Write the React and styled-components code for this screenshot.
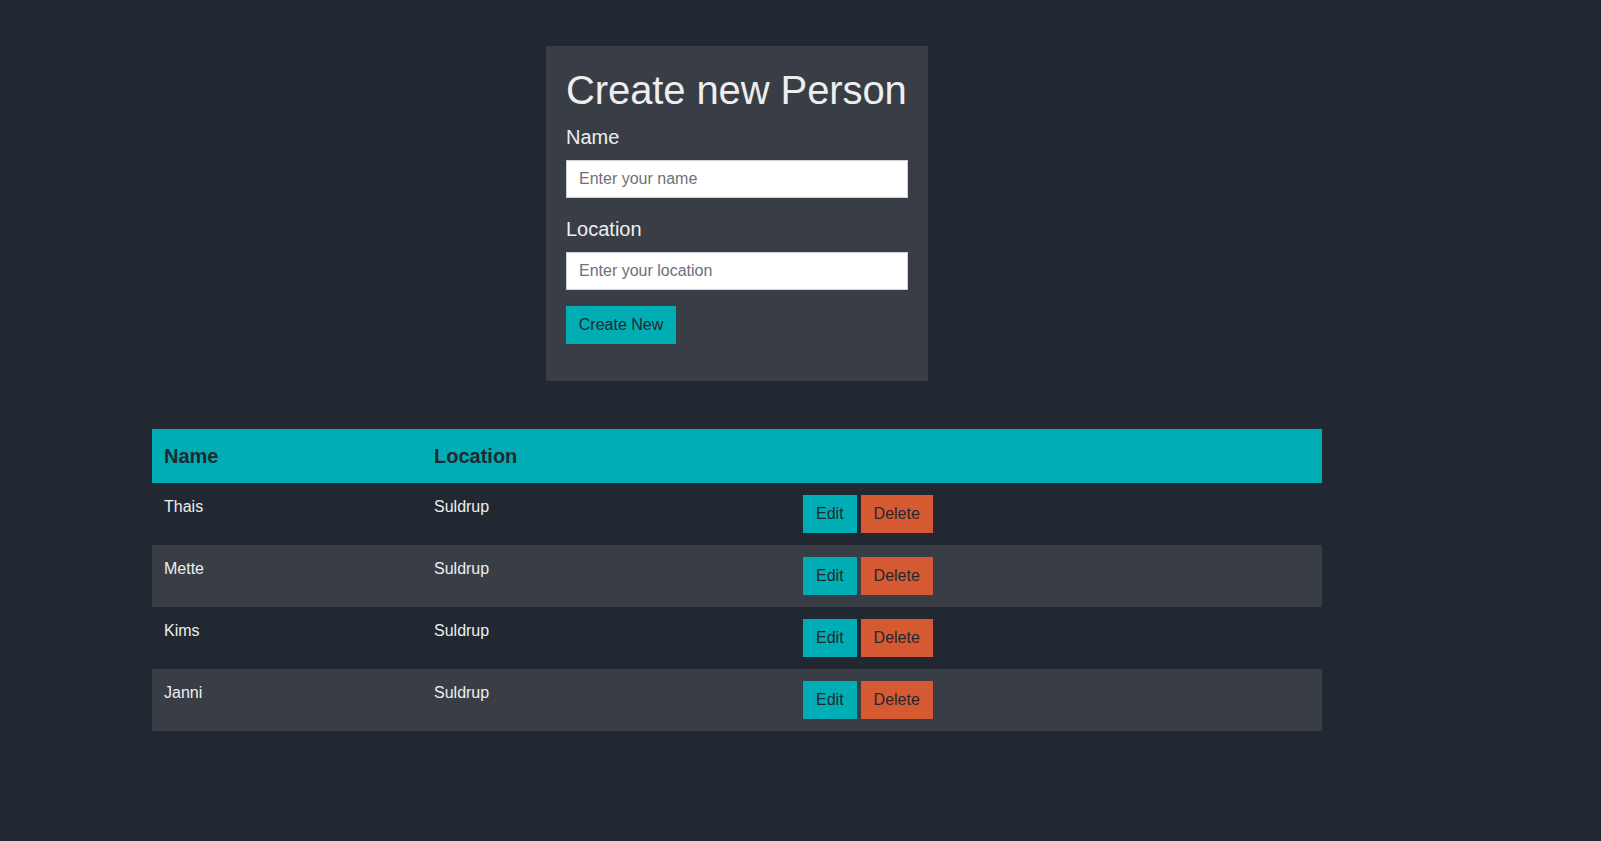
import React from "react";
import styled, { createGlobalStyle } from "styled-components";

const GlobalStyle = createGlobalStyle`
  html, body {
    margin: 0;
    padding: 0;
    background: #222831;
  }
  body {
    min-height: 841px;
    font-family: "Liberation Sans", Arial, sans-serif;
    color: #eeeeee;
    line-height: 1.5;
  }
  * { box-sizing: border-box; }
`;

const Page = styled.div`
  padding: 46px 0 40px 152px;
`;

const Container = styled.div`
  width: 1170px;
  display: flex;
  flex-direction: column;
  align-items: center;
  gap: 48px;
`;

const Card = styled.form`
  width: 382px;
  background: #393e46;
  padding: 20px 20px 37px;
  display: flex;
  flex-direction: column;
`;

const Title = styled.h1`
  margin: 0 0 8px;
  font-size: 40px;
  font-weight: 400;
  line-height: 1.2;
  white-space: nowrap;
  letter-spacing: -0.1px;
  color: #eeeeee;
`;

const Label = styled.label`
  font-size: 20px;
  line-height: 30px;
  margin-bottom: 8px;
  color: #eeeeee;
`;

const Input = styled.input`
  height: 38px;
  width: 100%;
  border: 1px solid #cfd3d8;
  background: #ffffff;
  padding: 0 12px;
  font-family: "Liberation Sans", Arial, sans-serif;
  font-size: 16px;
  color: #222831;
  margin-bottom: 16px;
  outline: none;
  &::placeholder { color: #6c727a; }
`;

const Button = styled.button`
  height: 38px;
  padding: 0 ${(p) => (p.$wide ? "12.8px" : "13px")};
  border: none;
  border-radius: 0;
  font-family: "Liberation Sans", Arial, sans-serif;
  font-size: 16px;
  line-height: 24px;
  color: #222831;
  background: ${(p) => (p.$danger ? "#d65a31" : "#00adb5")};
  cursor: pointer;
`;

const SubmitRow = styled.div`
  display: flex;
`;

const Table = styled.table`
  width: 1170px;
  border-collapse: collapse;
  table-layout: fixed;
`;

const HeadCell = styled.th`
  background: #00adb5;
  color: #222831;
  text-align: left;
  font-size: 20px;
  font-weight: 700;
  line-height: 30px;
  padding: 12px;
  width: ${(p) => p.$w || "auto"};
`;

const Row = styled.tr`
  background: ${(p) => (p.$striped ? "#393e46" : "transparent")};
`;

const Cell = styled.td`
  padding: 12px;
  font-size: 16px;
  line-height: 24px;
  vertical-align: top;
  color: #eeeeee;
`;

const Actions = styled.div`
  display: flex;
  gap: 4px;
`;

const people = [
  { name: "Thais", location: "Suldrup" },
  { name: "Mette", location: "Suldrup" },
  { name: "Kims", location: "Suldrup" },
  { name: "Janni", location: "Suldrup" },
];

export default function App() {
  return (
    <>
      <GlobalStyle />
      <Page>
        <Container>
          <Card onSubmit={(e) => e.preventDefault()}>
            <Title>Create new Person</Title>
            <Label htmlFor="name">Name</Label>
            <Input id="name" placeholder="Enter your name" />
            <Label htmlFor="location">Location</Label>
            <Input id="location" placeholder="Enter your location" />
            <SubmitRow>
              <Button type="submit" $wide>Create New</Button>
            </SubmitRow>
          </Card>
          <Table>
            <thead>
              <tr>
                <HeadCell $w="270px">Name</HeadCell>
                <HeadCell $w="369px">Location</HeadCell>
                <HeadCell />
              </tr>
            </thead>
            <tbody>
              {people.map((p, i) => (
                <Row key={p.name} $striped={i % 2 === 1}>
                  <Cell>{p.name}</Cell>
                  <Cell>{p.location}</Cell>
                  <Cell>
                    <Actions>
                      <Button type="button">Edit</Button>
                      <Button type="button" $danger>Delete</Button>
                    </Actions>
                  </Cell>
                </Row>
              ))}
            </tbody>
          </Table>
        </Container>
      </Page>
    </>
  );
}
